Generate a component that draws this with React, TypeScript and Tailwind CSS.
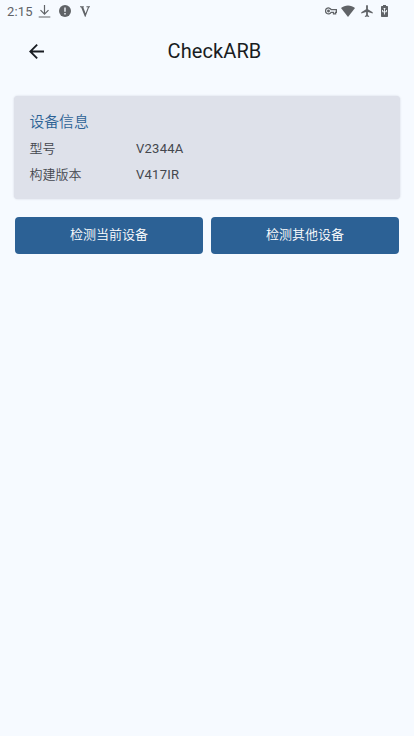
import React from 'react';

function StatusBar() {
  return (
    <div className="flex h-6 items-start justify-between pl-[7px] pr-[23px] text-[#606367]">
      <div className="flex h-[23px] items-center">
        <span className="w-[31px] text-[13px] leading-none tracking-[0.2px]">2:15</span>
        <svg className="h-[13px] w-[13px]" viewBox="0 0 13 13" fill="none" stroke="currentColor" strokeWidth="1.2">
          <path d="M6.5 0v9M2.5 5.2l4 4 4-4M.7 12h11.6" />
        </svg>
        <svg className="mb-px ml-2 h-3 w-3" viewBox="0 0 12 12" fill="currentColor">
          <circle cx="6" cy="6" r="6" />
          <path d="M5.3 2.5h1.4v4.3H5.3zM5.3 8h1.4v1.4H5.3z" fill="#f6faff" />
        </svg>
        <svg className="ml-[9px] h-[11px] w-[10px]" viewBox="0 0 10 11" fill="none" stroke="currentColor" strokeWidth="1.1">
          <path d="M0 .7h3.800M6.400 .7H10M1.500 .7l3.700 9.300L8.700 .7M2.500 .7l3 8" />
        </svg>
      </div>
      <div className="flex h-[22px] items-center">
        <svg className="h-2 w-3" viewBox="0 0 12 8" fill="none" stroke="currentColor" strokeWidth="1.3">
          <path d="M6.2 2.6h5.2v2.7h-.8v1.5H8.5V5.3H6.2A3 3 0 1 1 6.2 2.6Z" />
          <circle cx="3.5" cy="4" r=".8" fill="currentColor" />
        </svg>
        <svg className="ml-1 h-3 w-[14px]" viewBox="0 0 14 12" fill="currentColor">
          <path d="M7 12 0 3.1C2 1.3 4.4.4 7 .4s5 .9 7 2.7Z" />
        </svg>
        <svg className="ml-[6px] h-3 w-3" viewBox="2 2 19 20" fill="currentColor">
          <path d="M21 16v-2l-8-5V3.5c0-.83-.67-1.5-1.5-1.5S10 2.67 10 3.5V9l-8 5v2l8-2.5V19l-2 1.5V22l3.5-1 3.5 1v-1.5L13 19v-5.5l8 2.5Z" />
        </svg>
        <svg className="ml-2 mr-[3px] h-3 w-[7px]" viewBox="0 0 7 12" fill="currentColor">
          <path d="M2 0h3v1h1.3q.7 0 .7.7v9.6q0 .7-.7.7H.7Q0 12 0 11.3V1.7Q0 1 .7 1H2Z" />
          <path d="M3.5 3v6.5M1.5 5v1.8h4V5M2.6 3.5h1.8" fill="none" stroke="#f6faff" strokeWidth=".9" />
        </svg>
      </div>
    </div>
  );
}

function InfoRow({ label, value }: { label: string; value: string }) {
  return (
    <div className="flex h-[26px] items-center text-[13px] text-[#44474e]">
      <span className="w-[106.5px] font-[350]">{label}</span>
      <span className="tracking-[0.25px]">{value}</span>
    </div>
  );
}

function ActionButton({ children }: { children: React.ReactNode }) {
  return (
    <button className="flex h-[37px] flex-1 items-center justify-center rounded-[4px] bg-[#2c6195] pb-px text-[13px] font-[350] text-white">
      {children}
    </button>
  );
}

export default function App() {
  return (
    <div className="h-[736px] w-[414px] overflow-hidden bg-[#f6faff] font-[Roboto,'Noto_Sans_CJK_SC',sans-serif]">
      <StatusBar />
      <header className="grid h-[54px] grid-cols-[1fr_auto_1fr] items-center pl-[15px]">
        <button aria-label="返回" className="ml-[14px] w-4">
          <svg className="h-[15px] w-[15px] text-[#191c22]" viewBox="4 4 16 16" fill="currentColor">
            <path d="M20 11H7.83l5.59-5.59L12 4l-8 8 8 8 1.41-1.41L7.83 13H20v-2Z" />
          </svg>
        </button>
        <h1 className="text-[20px] leading-none tracking-[0.1px] text-[#191c22]">CheckARB</h1>
      </header>
      <main className="px-[14px] pt-[18px]">
        <section className="h-[103px] rounded-[4px] bg-[#dee1ea] px-[15.5px] pt-[15px] shadow-[0_0_2px_rgba(60,70,90,0.22)]">
          <h2 className="h-[25px] text-[14.8px] font-[350] leading-[22px] text-[#2c6195]">设备信息</h2>
          <InfoRow label="型号" value="V2344A" />
          <InfoRow label="构建版本" value="V417IR" />
        </section>
        <div className="mt-[18px] flex gap-2 px-px">
          <ActionButton>检测当前设备</ActionButton>
          <ActionButton>检测其他设备</ActionButton>
        </div>
      </main>
    </div>
  );
}
